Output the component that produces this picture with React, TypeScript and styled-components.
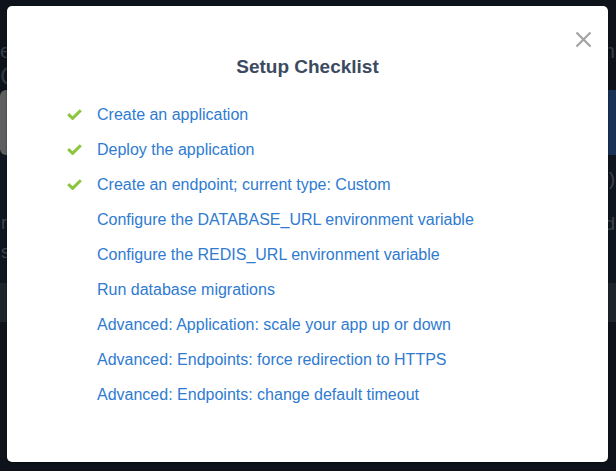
import styled, { createGlobalStyle } from 'styled-components';

// GLOBAL

const GlobalStyle = createGlobalStyle`
    html, body {
        margin: 0;
        padding: 0;
        background: #0e131b;
        overflow: hidden;
    }
    body {
        font-family: "Liberation Sans", Arial, Helvetica, sans-serif;
    }
`;

// BACKDROP PAGE (dimmed, behind the modal)

const Page = styled.div`
    width: 616px;
    height: 471px;
    background: #0e131b;
    color: #363d47;
    overflow: hidden;
    display: flex;
    flex-direction: column;
`;

const HeadRow = styled.div`
    display: flex;
    justify-content: space-between;
    align-items: center;
    height: 22px;
    margin-top: 40px;
    padding-right: 1px;
    font-size: 20px;
`;

const SubRow = styled.div`
    height: 28px;
    display: flex;
    align-items: center;
    font-size: 26px;
    color: #30363f;
`;

const ActionRow = styled.div`
    display: flex;
    justify-content: space-between;
    height: 65px;
`;

const GrayTab = styled.div`
    width: 40px;
    background: #5e5f61;
    border-radius: 6px;
`;

const BlueTab = styled.div`
    width: 60px;
    background: #1a3256;
`;

const InfoBlock = styled.div`
    display: flex;
    justify-content: space-between;
    height: 128px;
    background: #0f1620;
`;

const InfoColumn = styled.div<{ $align: 'left' | 'right' }>`
    display: flex;
    flex-direction: column;
    align-items: ${p => (p.$align === 'left' ? 'flex-start' : 'flex-end')};
    font-size: 18px;
    color: #3e4550;
    padding-top: ${p => (p.$align === 'left' ? '58px' : '14px')};
    gap: ${p => (p.$align === 'left' ? '8px' : '24px')};
    padding-left: ${p => (p.$align === 'left' ? '1px' : '0')};
    padding-right: ${p => (p.$align === 'left' ? '0' : '1px')};
`;

const GrayBand = styled.div`
    height: 39px;
    background: #1e242c;
`;

// MODAL

const Modal = styled.div`
    position: absolute;
    left: 7px;
    top: 6px;
    width: 601px;
    height: 456px;
    box-sizing: border-box;
    background: #ffffff;
    border-radius: 5px;
    box-shadow: 0 1px 2px rgba(0, 0, 0, 0.5);
    padding: 49px 0 0 0;
`;

const CloseButton = styled.button`
    position: absolute;
    top: 25px;
    right: 16px;
    width: 17px;
    height: 17px;
    padding: 0;
    border: none;
    background: transparent;
    cursor: pointer;
    display: flex;
`;

const Title = styled.h2`
    margin: 0;
    text-align: center;
    font-size: 19px;
    line-height: 24px;
    font-weight: bold;
    color: #3c4a60;
`;

const List = styled.ul`
    list-style: none;
    margin: 18px 0 0 0;
    padding: 0 0 0 60px;
`;

const Item = styled.li`
    display: flex;
    align-items: center;
    height: 35px;
`;

const CheckSlot = styled.span`
    width: 30px;
    flex: none;
    display: flex;
    align-items: center;
`;

const ItemLink = styled.a`
    color: #2f7bd1;
    font-size: 16px;
    text-decoration: none;
    cursor: pointer;
`;

const Check = () => (
    <svg width="15" height="11" viewBox="0 0 15 11">
        <path d="M1.2 5.2 L5.6 9.4 L13.8 1.2" fill="none" stroke="#8cc63f" strokeWidth="3" />
    </svg>
);

const CloseIcon = () => (
    <svg width="17" height="17" viewBox="0 0 17 17">
        <path d="M1.5 1.5 L15.5 15.5 M15.5 1.5 L1.5 15.5" stroke="#a3a3a3" strokeWidth="2.2" />
    </svg>
);

const steps = [
    { label: 'Create an application', done: true },
    { label: 'Deploy the application', done: true },
    { label: 'Create an endpoint; current type: Custom', done: true },
    { label: 'Configure the DATABASE_URL environment variable', done: false },
    { label: 'Configure the REDIS_URL environment variable', done: false },
    { label: 'Run database migrations', done: false },
    { label: 'Advanced: Application: scale your app up or down', done: false },
    { label: 'Advanced: Endpoints: force redirection to HTTPS', done: false },
    { label: 'Advanced: Endpoints: change default timeout', done: false },
];

const App = () => (
    <>
        <GlobalStyle />
        <Page>
            <HeadRow>
                <span>environments</span>
                <span>Production</span>
            </HeadRow>
            <SubRow>Custom</SubRow>
            <ActionRow>
                <GrayTab />
                <BlueTab />
            </ActionRow>
            <InfoBlock>
                <InfoColumn $align="left">
                    <span>running</span>
                    <span>saved</span>
                </InfoColumn>
                <InfoColumn $align="right">
                    <span>(9)</span>
                    <span>Add</span>
                </InfoColumn>
            </InfoBlock>
            <GrayBand />
        </Page>

        <Modal>
            <CloseButton aria-label="Close">
                <CloseIcon />
            </CloseButton>
            <Title>Setup Checklist</Title>
            <List>
                {steps.map(step => (
                    <Item key={step.label}>
                        <CheckSlot>{step.done && <Check />}</CheckSlot>
                        <ItemLink>{step.label}</ItemLink>
                    </Item>
                ))}
            </List>
        </Modal>
    </>
);

export default App;
